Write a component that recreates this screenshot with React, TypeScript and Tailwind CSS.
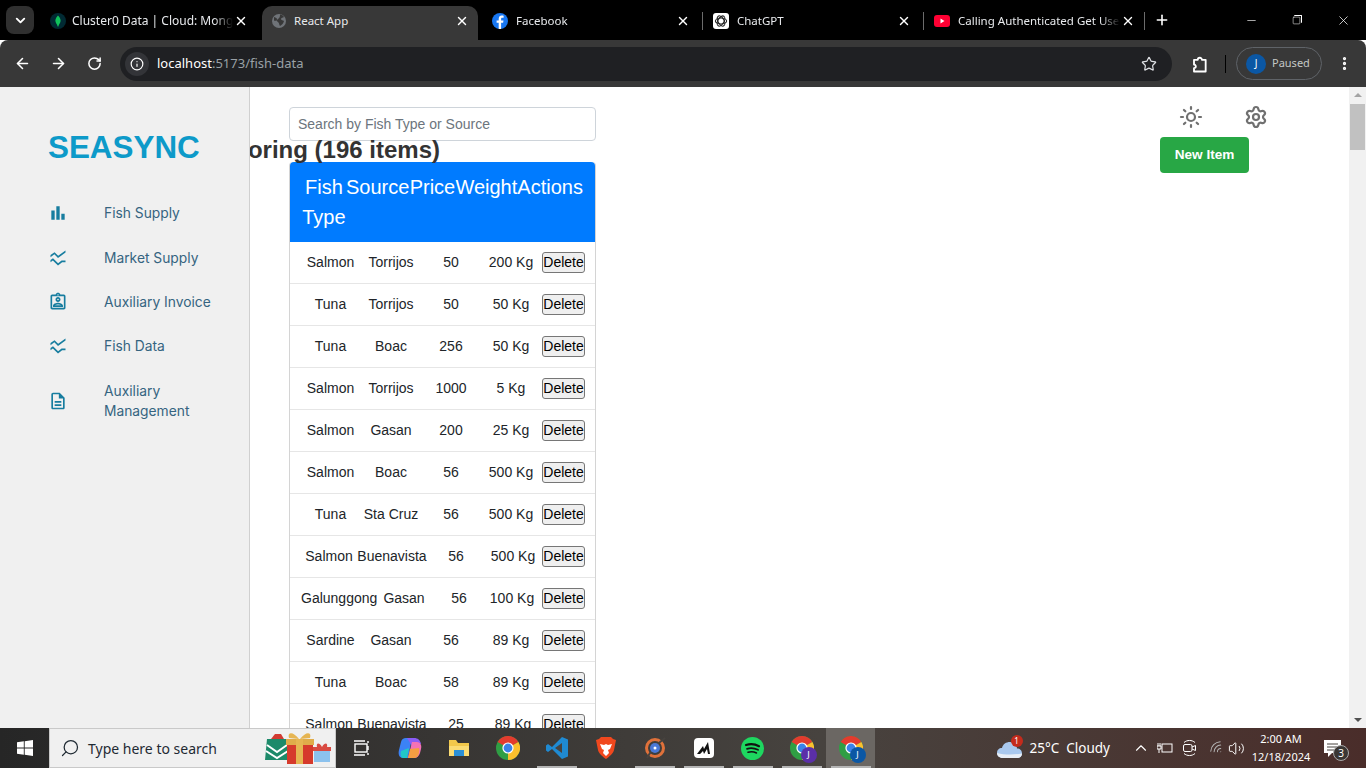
import { ArrowLeft, ArrowRight, ChevronDown, ChevronUp, EllipsisVertical, Info, Minus, Plus, RotateCw, Search, Settings, Square, Star, Sun, Volume2, Wifi, X } from 'lucide-react';
import { MdBarChart, MdOutlineAssignmentInd, MdOutlineDescription, MdSsidChart } from 'react-icons/md';
import type { ReactNode } from 'react';

const NAV = [
    { label: 'Fish Supply', icon: MdBarChart, rowClass: 'h-[44px]' },
    { label: 'Market Supply', icon: MdSsidChart, rowClass: 'h-[45px]' },
    { label: 'Auxiliary Invoice', icon: MdOutlineAssignmentInd, rowClass: 'h-[44px]' },
    { label: 'Fish Data', icon: MdSsidChart, rowClass: 'h-[44px]' },
    { label: 'Auxiliary Management', icon: MdOutlineDescription, rowClass: 'h-[66px]' },
];

const COLS = 'grid-cols-[59px_62px_58px_62px_43px]';
const COLS_WIDE = 'grid-cols-[56px_70px_58px_56px_44px]';
const COLS_LONG = 'grid-cols-[73px_60px_50px_56px_45px]';

const ROWS = [
    { type: 'Salmon', source: 'Torrijos', price: '50', weight: '200 Kg', cols: COLS },
    { type: 'Tuna', source: 'Torrijos', price: '50', weight: '50 Kg', cols: COLS },
    { type: 'Tuna', source: 'Boac', price: '256', weight: '50 Kg', cols: COLS },
    { type: 'Salmon', source: 'Torrijos', price: '1000', weight: '5 Kg', cols: COLS },
    { type: 'Salmon', source: 'Gasan', price: '200', weight: '25 Kg', cols: COLS },
    { type: 'Salmon', source: 'Boac', price: '56', weight: '500 Kg', cols: COLS },
    { type: 'Tuna', source: 'Sta Cruz', price: '56', weight: '500 Kg', cols: COLS },
    { type: 'Salmon', source: 'Buenavista', price: '56', weight: '500 Kg', cols: COLS_WIDE },
    { type: 'Galunggong', source: 'Gasan', price: '56', weight: '100 Kg', cols: COLS_LONG },
    { type: 'Sardine', source: 'Gasan', price: '56', weight: '89 Kg', cols: COLS },
    { type: 'Tuna', source: 'Boac', price: '58', weight: '89 Kg', cols: COLS },
    { type: 'Salmon', source: 'Buenavista', price: '25', weight: '89 Kg', cols: COLS_WIDE },
];

function ChromeLogo({ size = 24 }: { size?: number }) {
    return (
        <svg width={size} height={size} viewBox="0 0 24 24">
            <circle cx="12" cy="12" r="12" fill="#2f9e44" />
            <path d="M12 12 1.6 6A12 12 0 0 1 22.4 6Z" fill="#e33b2e" />
            <path d="M12 12 22.4 6A12 12 0 0 1 12 24Z" fill="#fbc02d" />
            <circle cx="12" cy="12" r="5.6" fill="#fff" />
            <circle cx="12" cy="12" r="4.4" fill="#3b82e8" />
        </svg>
    );
}

function Tab({ icon, title, active, first, last }: { icon: ReactNode; title: string; active?: boolean; first?: boolean; last?: boolean }) {
    return (
        <div
            className={
                active
                    ? 'ml-[-1px] mr-[6px] mt-[6px] flex h-[34px] w-[216px] items-center rounded-t-[10px] bg-[#383838] pb-[5px] pl-[9px] pr-[8px]'
                    : 'mt-[6px] flex h-[34px] w-[221px] items-center pb-[5px] pl-2 pr-[2px]'
            }
        >
            <span className="flex h-4 w-4 shrink-0 items-center justify-center">{icon}</span>
            <span
                className={
                    first
                        ? 'ml-[6px] min-w-0 flex-1 overflow-hidden whitespace-nowrap text-[12px] text-[#e8eaed] [mask-image:linear-gradient(to_right,black_88%,transparent)]'
                        : active
                          ? 'ml-[7px] min-w-0 flex-1 overflow-hidden whitespace-nowrap text-[11.5px] text-[#e8eaed]'
                          : 'ml-[8px] min-w-0 flex-1 overflow-hidden whitespace-nowrap text-[11.5px] text-[#e8eaed] [mask-image:linear-gradient(to_right,black_88%,transparent)]'
                }
            >
                {title}
            </span>
            <X size={14} strokeWidth={2.4} className="mx-px shrink-0 text-white" />
            {!active && !first && <span className={last ? 'ml-[8px] h-[18px] w-px bg-[#6b6b6b]' : 'ml-[11px] h-[18px] w-px bg-[#6b6b6b]'} />}
            {first && <span className="ml-[11px] h-[18px] w-px" />}
        </div>
    );
}

function BrowserChrome() {
    return (
        <header className="shrink-0 font-['Noto_Sans',sans-serif]">
            <div className="flex h-[40px] bg-black text-white">
                <div className="ml-[6px] mt-[6px] flex h-[28px] w-[28px] items-center justify-center rounded-lg bg-[#303030]">
                    <ChevronDown size={15} strokeWidth={3} />
                </div>
                <div className="w-[8px]" />
                <Tab
                    first
                    title="Cluster0 Data | Cloud: MongoDB Cloud"
                    icon={
                        <svg width="16" height="16" viewBox="0 0 16 16">
                            <circle cx="8" cy="8" r="8" fill="#012a33" />
                            <path d="M8 2.5C10.4 5 11 7 10.4 9c-.4 1.4-1.6 2.4-2 4.5h-.8C7.2 11.4 6 10.4 5.6 9 5 7 5.6 5 8 2.5Z" fill="#10c25b" />
                        </svg>
                    }
                />
                <Tab
                    active
                    title="React App"
                    icon={
                        <svg width="16" height="16" viewBox="0 0 16 16">
                            <circle cx="8" cy="8" r="7" fill="#6f7378" />
                            <path d="M3 4c2 .5 3 1 3 2.5S4 8 3 7.5ZM9 1.5c2 0 3 1 4 2.5-1 1-3 .5-3 2s2 1 3 2c-.5 2-2 4-4 5-1-1-.5-3-2-4S5 7.5 7 6s2-3 2-4.5Z" fill="#383838" />
                        </svg>
                    }
                />
                <Tab
                    title="Facebook"
                    icon={
                        <svg width="16" height="16" viewBox="0 0 16 16">
                            <circle cx="8" cy="8" r="8" fill="#1877f2" />
                            <path d="M9.1 16V9.8h2l.4-2.4H9.1V6c0-.8.3-1.2 1.2-1.2h1.3V2.7c-.5-.1-1.1-.2-1.9-.2C8 2.5 6.7 3.7 6.7 5.8v1.6H4.6v2.400h2.100V16Z" fill="#fff" />
                        </svg>
                    }
                />
                <Tab
                    title="ChatGPT"
                    icon={
                        <svg width="16" height="16" viewBox="0 0 16 16">
                            <rect width="16" height="16" rx="3" fill="#fff" />
                            <g fill="none" stroke="#222" strokeWidth="1.1">
                                <ellipse cx="8" cy="8" rx="5.6" ry="3" />
                                <ellipse cx="8" cy="8" rx="5.6" ry="3" transform="rotate(60 8 8)" />
                                <ellipse cx="8" cy="8" rx="5.6" ry="3" transform="rotate(120 8 8)" />
                            </g>
                        </svg>
                    }
                />
                <Tab
                    last
                    title="Calling Authenticated Get User"
                    icon={
                        <svg width="16" height="16" viewBox="0 0 16 16">
                            <rect y="2" width="16" height="12" rx="3" fill="#ff0033" />
                            <path d="M6.5 5.5v5L10.5 8Z" fill="#fff" />
                        </svg>
                    }
                />
                <Plus size={16} strokeWidth={2.4} className="ml-[7px] mt-[12px]" />
                <div className="ml-auto flex">
                    <div className="flex w-[46px] items-center justify-center">
                        <Minus size={13} strokeWidth={1.2} />
                    </div>
                    <div className="flex w-[46px] items-center justify-center">
                        <span className="relative h-[10px] w-[10px]">
                            <Square size={9} strokeWidth={1.4} className="absolute bottom-0 left-0" />
                            <span className="absolute right-0 top-0 h-[8px] w-[8px] rounded-[1px] border-r border-t border-white" />
                        </span>
                    </div>
                    <div className="flex w-[46px] items-center justify-center">
                        <X size={15} strokeWidth={1.2} />
                    </div>
                </div>
            </div>
            <div className="flex h-[47px] items-center rounded-t-[8px] bg-[#383838] pl-[14px] pr-[12px] text-white">
                <ArrowLeft size={17} strokeWidth={2.2} />
                <ArrowRight size={17} strokeWidth={2.2} className="ml-[19px]" />
                <RotateCw size={15} strokeWidth={2.4} className="ml-[20px]" />
                <div className="ml-[18px] flex h-[34px] w-[1052px] items-center rounded-full bg-[#1f2023] pl-[5px] pr-[15px]">
                    <span className="flex h-[24px] w-[24px] items-center justify-center rounded-full bg-[#333438]">
                        <Info size={14} strokeWidth={2} />
                    </span>
                    <span className="ml-[8px] text-[13px] text-white">
                        localhost<span className="text-[#9aa0a6]">:5173/fish-data</span>
                    </span>
                    <Star size={16} strokeWidth={1.8} className="ml-auto text-[#dfe1e5]" />
                </div>
                <svg width="20" height="20" viewBox="0 0 24 24" fill="none" stroke="#fff" strokeWidth="2.2" strokeLinejoin="round" className="ml-[17px]">
                    <path d="M6 21v-4a2.2 2.2 0 0 0 0-4.4V7h4.500a2.500 2.500 0 0 1 5 0H20v14Z" />
                </svg>
                <span className="ml-[16px] h-[18px] w-px bg-black" />
                <div className="ml-[10px] flex h-[33px] w-[86px] items-center rounded-full border border-[#5f6368] pl-[9px]">
                    <span className="flex h-[20px] w-[20px] shrink-0 items-center justify-center rounded-full bg-[#0b57a4] text-[10px]">J</span>
                    <span className="ml-[6px] text-[11px] text-[#c4c7c5]">Paused</span>
                </div>
                <EllipsisVertical size={17} strokeWidth={2.6} className="ml-[14px]" />
            </div>
        </header>
    );
}

function Sidebar() {
    return (
        <aside className="w-[250px] shrink-0 border-r border-[#d0d0d0] bg-[#f0f0f0] pl-[48px] font-['Inter',sans-serif]">
            <div className="mt-[43px] font-['Liberation_Sans',sans-serif] text-[31.4px] font-bold leading-[36px] text-[#0d9ac9]">SEASYNC</div>
            <nav className="mt-[25px]">
                {NAV.map((item) => (
                    <div key={item.label} className={`flex items-center ${item.rowClass}`}>
                        <item.icon size={20} className="shrink-0 text-[#177d9f]" />
                        <span className="ml-[36px] w-[110px] text-[13.8px] leading-[20px] text-[#356480]">{item.label}</span>
                    </div>
                ))}
            </nav>
        </aside>
    );
}

function FishTable() {
    return (
        <div className="rounded-t-[4px] border-x border-[#d4d4d4] text-[14px] text-[#212529]">
            <div className="flex h-[80px] rounded-t-[4px] bg-[#007bff] px-[12px] py-[10px] text-[20px] leading-[30px] text-white">
                <div className="w-[44px] text-center">Fish Type</div>
                <div className="w-[64px] text-center">Source</div>
                <div className="w-[46px] text-center">Price</div>
                <div className="w-[62px] text-center">Weight</div>
                <div className="w-[66px] text-center">Actions</div>
            </div>
            {ROWS.map((row, i) => (
                <div key={i} className={`grid h-[42px] items-center border-b border-[#e6e6e6] pl-[11px] text-center ${row.cols}`}>
                    <span className="whitespace-nowrap">{row.type}</span>
                    <span className="whitespace-nowrap">{row.source}</span>
                    <span>{row.price}</span>
                    <span className="whitespace-nowrap">{row.weight}</span>
                    <button className="h-[21px] w-[43px] justify-self-end rounded-[3px] border border-[#767676] bg-[#efefef] pb-px text-[14px] leading-[17px] text-black">Delete</button>
                </div>
            ))}
        </div>
    );
}

function Main() {
    return (
        <main className="min-w-0 flex-1 overflow-hidden font-['Liberation_Sans',sans-serif]">
            <div className="flex justify-between pl-[39px] pr-[81px] pt-[18px]">
                <div className="w-[307px]">
                    <div className="mt-[2px] flex h-[34px] items-center rounded-[4px] border border-[#ced4da] bg-white pl-[8px] text-[14px] text-[#6c757d]">
                        Search by Fish Type or Source
                    </div>
                    <h2 className="ml-[-200px] h-[21px] w-[351px] whitespace-nowrap text-right text-[24px] font-bold leading-[17px] text-[#333]">
                        Monitoring (196 items)
                    </h2>
                    <FishTable />
                </div>
                <div className="w-[108px]">
                    <div className="flex justify-end gap-[41px] text-[#707070]">
                        <Sun size={24} strokeWidth={2.2} />
                        <Settings size={24} strokeWidth={2.2} />
                    </div>
                    <button className="mt-[8px] h-[36px] w-[89px] rounded-[4px] bg-[#28a745] pt-px text-[13.6px] font-bold text-white">New Item</button>
                </div>
            </div>
        </main>
    );
}

function Scrollbar() {
    return (
        <div className="flex w-[17px] shrink-0 flex-col items-center bg-[#f1f1f1]">
            <span className="mt-[6px] h-0 w-0 border-x-[4px] border-b-[4px] border-x-transparent border-b-[#a3a3a3]" />
            <span className="mt-[7px] h-[46px] w-[15px] bg-[#c1c1c1]" />
            <span className="mt-auto mb-[6px] h-0 w-0 border-x-[4px] border-t-[4px] border-x-transparent border-t-[#505050]" />
        </div>
    );
}

function Slot({ children, open, active }: { children: ReactNode; open?: boolean; active?: boolean }) {
    return (
        <div className={active ? 'relative flex h-[40px] w-[49px] items-center justify-center bg-[#6b6763]' : 'relative flex h-[40px] w-[49px] items-center justify-center'}>
            {children}
            {open && <span className="absolute bottom-0 left-[5px] h-[2px] w-[40px] bg-[#b5b5b5]" />}
        </div>
    );
}

function Taskbar() {
    return (
        <footer className="flex h-[40px] shrink-0 items-center bg-gradient-to-r from-[#262626] via-[#47433f] via-60% to-[#4a2d2a] font-['Noto_Sans',sans-serif] text-white">
            <div className="flex h-[40px] w-[49px] items-center justify-center">
                <svg width="16" height="16" viewBox="0 0 16 16" fill="#fff">
                    <path d="M0 2.3 6.8 1.3V7.6H0ZM7.7 1.2 16 0V7.6H7.7ZM0 8.4H6.8V14.7L0 13.7ZM7.7 8.4H16V16L7.7 14.8Z" />
                </svg>
            </div>
            <div className="flex h-[40px] w-[287px] items-center border border-[#c9c9c9] bg-[#f0f0f0] pl-[10px] text-[#1f2a33]">
                <Search size={20} strokeWidth={1.5} className="-scale-x-100" />
                <span className="ml-[8px] text-[14px]">Type here to search</span>
                <svg width="70" height="34" viewBox="0 0 70 34" className="ml-auto mr-[2px]">
                    <path d="M4 8h20l2 21H2Z" fill="#1d8a6a" />
                    <path d="M4 14l10 7 10-7M3 20l11 7 11-7" stroke="#fff" strokeWidth="2" fill="none" />
                    <path d="M8 8l4-5h6l3 5Z" fill="#d23b32" />
                    <rect x="24" y="11" width="26" height="22" fill="#d63a2c" />
                    <rect x="23" y="8" width="28" height="6" fill="#e0ac4a" />
                    <rect x="33" y="8" width="7" height="25" fill="#e6b552" />
                    <path d="M36 8C30 0 24 1 26 7ZM37 8C43 0 49 1 47 7Z" fill="#e6b552" />
                    <rect x="51" y="19" width="16" height="12" fill="#8cc2ee" />
                    <rect x="50" y="16" width="18" height="4" fill="#d94a42" />
                    <path d="M59 16c-3-5-6-4-5 0ZM59 16c3-5 6-4 5 0Z" fill="#d94a42" />
                </svg>
            </div>
            <Slot>
                <svg width="18" height="18" viewBox="0 0 18 18" fill="none" stroke="#fff" strokeWidth="1.4">
                    <rect x="3" y="5" width="12" height="8" />
                    <path d="M2 2h11M2 16h11M16 2v2M16 7v4M16 14v2" />
                </svg>
            </Slot>
            <Slot>
                <svg width="24" height="24" viewBox="0 0 24 24">
                    <path d="M8 2h6l-4 20H5C1 22 0 18 1 14L3 6c.5-2.5 2.5-4 5-4Z" fill="#3b82f6" />
                    <path d="M9 2h7c4 0 6 2 7 6l-9 2Z" fill="#8b5cf6" />
                    <path d="M14 6h5c3 0 5 3 4 7l-1 4c-1 3-3 5-6 5h-6Z" fill="#f472b6" />
                    <path d="M3 15l8-3-2 10H5c-2 0-3-3-2-7Z" fill="#22c7c7" />
                    <path d="M16 22h-6l2-9 9-1c1 5-1 10-5 10Z" fill="#f59e42" />
                </svg>
            </Slot>
            <Slot>
                <svg width="22" height="20" viewBox="0 0 22 20">
                    <path d="M1 2h7l2 3h11v13H1Z" fill="#f2c84b" />
                    <rect x="1" y="8" width="20" height="10" fill="#fbdc74" />
                    <rect x="6" y="12" width="10" height="6" fill="#2b8fd6" />
                </svg>
            </Slot>
            <Slot>
                <ChromeLogo />
            </Slot>
            <Slot open>
                <svg width="24" height="24" viewBox="0 0 24 24">
                    <path d="M17 1 7 11 3 8 1 9.5v5L3 16l4-3 10 10 6-2.5V3.5Z" fill="#1f8ad2" />
                    <path d="M17 7v10l-7-5Z" fill="#47433f" />
                </svg>
            </Slot>
            <Slot>
                <svg width="20" height="24" viewBox="0 0 20 24">
                    <path d="M5 1h10l2 2 3 1-2 10c-.5 3-5 7-8 9-3-2-7.5-6-8-9L0 4l3-1Z" fill="#f1481e" />
                    <path d="M4 8l4 1 2-1 2 1 4-1-2 5-2 1 1 3-3 3-3-3 1-3-2-1Z" fill="#fff" />
                </svg>
            </Slot>
            <Slot open>
                <svg width="24" height="24" viewBox="0 0 24 24" fill="none">
                    <circle cx="12" cy="12" r="8.5" stroke="#e0713a" strokeWidth="3" />
                    <path d="M4 22C8 14 14 8 22 2" stroke="#47433f" strokeWidth="2" />
                    <circle cx="12" cy="12" r="5" fill="#4a78d6" />
                    <circle cx="12" cy="12" r="1.5" fill="#fff" />
                </svg>
            </Slot>
            <Slot open>
                <svg width="20" height="20" viewBox="0 0 20 20">
                    <rect width="20" height="20" rx="4" fill="#fff" />
                    <path d="M3 16 9 8l1 3 4-7 2 12h-2l-1-5-3 5-1-3-3 3Z" fill="#111" />
                </svg>
            </Slot>
            <Slot open>
                <svg width="23" height="23" viewBox="0 0 23 23" fill="none" stroke="#111" strokeLinecap="round">
                    <circle cx="11.5" cy="11.5" r="11.5" fill="#1ed760" stroke="none" />
                    <path d="M5 8c4-1.2 9-1 13 1.2" strokeWidth="2.2" />
                    <path d="M6 11.8c3.5-1 7.5-.7 11 1" strokeWidth="1.8" />
                    <path d="M7 15.2c3-.8 6-.5 8.5.8" strokeWidth="1.5" />
                </svg>
            </Slot>
            <Slot open>
                <span className="relative">
                    <ChromeLogo />
                    <span className="absolute -bottom-[3px] -right-[3px] flex h-[16px] w-[16px] items-center justify-center rounded-full bg-[#5b2fa8] text-[9px]">J</span>
                </span>
            </Slot>
            <Slot open active>
                <span className="relative">
                    <ChromeLogo />
                    <span className="absolute -bottom-[3px] -right-[3px] flex h-[16px] w-[16px] items-center justify-center rounded-full bg-[#0b57a4] text-[9px]">J</span>
                </span>
            </Slot>
            <div className="ml-auto flex items-center pr-[25px]">
                <span className="relative mr-[8px]">
                    <svg width="25" height="17" viewBox="0 0 25 17" className="mt-[3px]">
                        <path d="M6 17C2 17 0 14.5 0 12c0-3 2-5 5-5 1-4 4-6 8-6s7 3 7 6.5c3 0 5 2 5 5s-2 4.5-5 4.5Z" fill="#a9c8ee" />
                        <path d="M6 17C2 17 0 14.5 0 12c8 2 16 2 25 .5 0 2.5-2 4.5-5 4.5Z" fill="#e8eef6" />
                    </svg>
                    <span className="absolute -top-[3px] right-[-1px] flex h-[12px] w-[12px] items-center justify-center rounded-full bg-[#c42b1c] text-[8px]">1</span>
                </span>
                <span className="whitespace-nowrap text-[13.5px]">25°C&nbsp; Cloudy</span>
                <ChevronUp size={18} strokeWidth={1.5} className="ml-[22px]" />
                <svg width="16" height="14" viewBox="0 0 16 14" fill="none" stroke="#fff" className="ml-[7px]">
                    <rect x="5" y="3" width="10" height="8" />
                    <path d="M0 5h4v3H0ZM1 5V2M3 5V2M2 8v4" />
                </svg>
                <svg width="15" height="18" viewBox="0 0 15 18" fill="none" stroke="#fff" className="ml-[9px]">
                    <path d="M2 3.5C5 .8 10 .8 13 3.5M2 14.5C5 17.2 10 17.2 13 14.5" />
                    <rect x="1.5" y="5.5" width="8.5" height="7" rx="1.5" />
                    <path d="M10 8l3.5-1.5v5L10 10" />
                </svg>
                <Wifi size={16} strokeWidth={1.5} className="ml-[12px] -rotate-45 text-[#b5b5b5]" />
                <Volume2 size={17} strokeWidth={1.4} className="ml-[3px]" />
                <div className="ml-[4px] flex w-[64px] flex-col items-center text-[11px] leading-[18px]">
                    <span>2:00 AM</span>
                    <span>12/18/2024</span>
                </div>
                <span className="relative ml-[11px]">
                    <svg width="17" height="18" viewBox="0 0 17 18">
                        <path d="M0 1h17v13H8l-4 4v-4H0Z" fill="#fff" />
                        <path d="M3 5h11M3 8h11M3 11h8" stroke="#47433f" />
                    </svg>
                    <span className="absolute -bottom-[4px] -right-[8px] flex h-[16px] w-[16px] items-center justify-center rounded-full border border-[#aaa] bg-[#3a3634] text-[10px]">3</span>
                </span>
            </div>
        </footer>
    );
}

export default function App() {
    return (
        <div className="flex h-screen w-full flex-col overflow-hidden bg-white">
            <BrowserChrome />
            <div className="flex min-h-0 flex-1">
                <Sidebar />
                <Main />
                <Scrollbar />
            </div>
            <Taskbar />
        </div>
    );
}
